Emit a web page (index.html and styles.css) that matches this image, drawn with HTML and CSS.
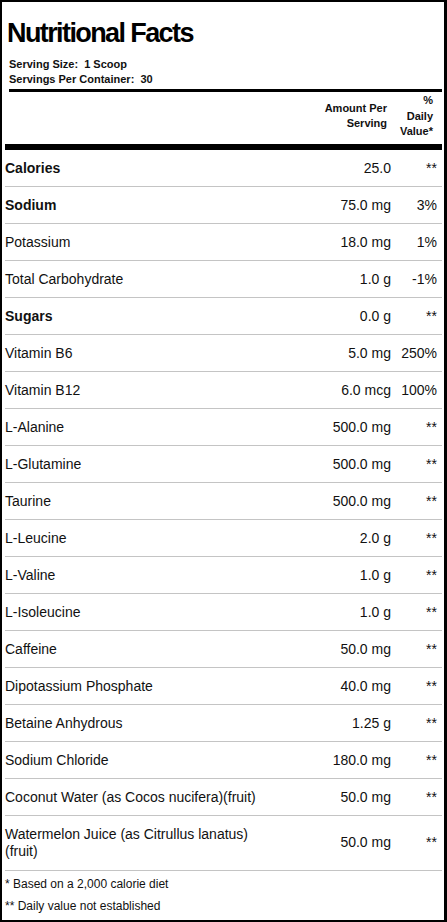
FILE: index.html
```html
<!DOCTYPE html>
<html lang="en">
<head>
    <meta charset="UTF-8">
    <meta name="viewport" content="width=device-width, initial-scale=1.0">
    <title>Nutritional Facts</title>
    <link rel="stylesheet" href="styles.css">
</head>
<body>
    <div class="label">
        <h1 class="title">Nutritional Facts</h1>
        <div class="serving">
            <div>Serving Size:&nbsp; 1 Scoop</div>
            <div>Servings Per Container:&nbsp; 30</div>
        </div>

        <div class="row head-row">
            <div class="name"></div>
            <div class="amount">Amount Per<br>Serving</div>
            <div class="dv">%<br>Daily<br>Value*</div>
        </div>

        <div class="row bold">
            <div class="name">Calories</div>
            <div class="amount">25.0</div>
            <div class="dv">**</div>
        </div>
        <div class="row bold">
            <div class="name">Sodium</div>
            <div class="amount">75.0 mg</div>
            <div class="dv">3%</div>
        </div>
        <div class="row">
            <div class="name">Potassium</div>
            <div class="amount">18.0 mg</div>
            <div class="dv">1%</div>
        </div>
        <div class="row">
            <div class="name">Total Carbohydrate</div>
            <div class="amount">1.0 g</div>
            <div class="dv">-1%</div>
        </div>
        <div class="row bold">
            <div class="name">Sugars</div>
            <div class="amount">0.0 g</div>
            <div class="dv">**</div>
        </div>
        <div class="row">
            <div class="name">Vitamin B6</div>
            <div class="amount">5.0 mg</div>
            <div class="dv">250%</div>
        </div>
        <div class="row">
            <div class="name">Vitamin B12</div>
            <div class="amount">6.0 mcg</div>
            <div class="dv">100%</div>
        </div>
        <div class="row">
            <div class="name">L-Alanine</div>
            <div class="amount">500.0 mg</div>
            <div class="dv">**</div>
        </div>
        <div class="row">
            <div class="name">L-Glutamine</div>
            <div class="amount">500.0 mg</div>
            <div class="dv">**</div>
        </div>
        <div class="row">
            <div class="name">Taurine</div>
            <div class="amount">500.0 mg</div>
            <div class="dv">**</div>
        </div>
        <div class="row">
            <div class="name">L-Leucine</div>
            <div class="amount">2.0 g</div>
            <div class="dv">**</div>
        </div>
        <div class="row">
            <div class="name">L-Valine</div>
            <div class="amount">1.0 g</div>
            <div class="dv">**</div>
        </div>
        <div class="row">
            <div class="name">L-Isoleucine</div>
            <div class="amount">1.0 g</div>
            <div class="dv">**</div>
        </div>
        <div class="row">
            <div class="name">Caffeine</div>
            <div class="amount">50.0 mg</div>
            <div class="dv">**</div>
        </div>
        <div class="row">
            <div class="name">Dipotassium Phosphate</div>
            <div class="amount">40.0 mg</div>
            <div class="dv">**</div>
        </div>
        <div class="row">
            <div class="name">Betaine Anhydrous</div>
            <div class="amount">1.25 g</div>
            <div class="dv">**</div>
        </div>
        <div class="row">
            <div class="name">Sodium Chloride</div>
            <div class="amount">180.0 mg</div>
            <div class="dv">**</div>
        </div>
        <div class="row">
            <div class="name">Coconut Water (as Cocos nucifera)(fruit)</div>
            <div class="amount">50.0 mg</div>
            <div class="dv">**</div>
        </div>
        <div class="row tall">
            <div class="name">Watermelon Juice (as Citrullus lanatus) (fruit)</div>
            <div class="amount">50.0 mg</div>
            <div class="dv">**</div>
        </div>

        <div class="notes">
            <p>* Based on a 2,000 calorie diet</p>
            <p>** Daily value not established</p>
        </div>
    </div>
</body>
</html>
```

FILE: styles.css
```css
body {
    margin: 0;
    padding: 0;
    background-color: #fff;
    font-family: "Liberation Sans", Arial, sans-serif;
    color: #111;
}
.label {
    box-sizing: border-box;
    width: 447px;
    min-height: 922px;
    border: 2px solid #000;
    border-right-width: 3px;
    padding: 0 2px 3px 3px;
}
.title {
    margin: 15px 0 0 2px;
    font-size: 27px;
    line-height: 32px;
    letter-spacing: -1.6px;
    font-weight: bold;
    color: #000;
}
.serving {
    margin: 8px 0 0 4px;
    padding-bottom: 2px;
    font-size: 11px;
    line-height: 15px;
    font-weight: bold;
    border-bottom: 3px solid #000;
}
.row {
    display: grid;
    grid-template-columns: 1fr 121px 51px;
    align-items: center;
    font-size: 14px;
    line-height: 16px;
    padding: 10px 0;
    border-bottom: 1px solid #c4c4c4;
}
.row.tall {
    line-height: 17px;
}
.row .amount {
    text-align: right;
}
.row .dv {
    text-align: right;
    padding-right: 5px;
}
.row.bold .name {
    font-weight: bold;
}
.head-row {
    font-size: 11px;
    line-height: 15.5px;
    font-weight: bold;
    padding: 1px 0 4px;
    border-bottom: 6px solid #000;
}
.head-row .amount {
    padding-right: 4px;
}
.head-row .dv {
    padding-right: 9px;
}
.notes {
    padding-top: 2px;
    font-size: 12px;
    line-height: 22px;
}
.notes p {
    margin: 0;
}
```
